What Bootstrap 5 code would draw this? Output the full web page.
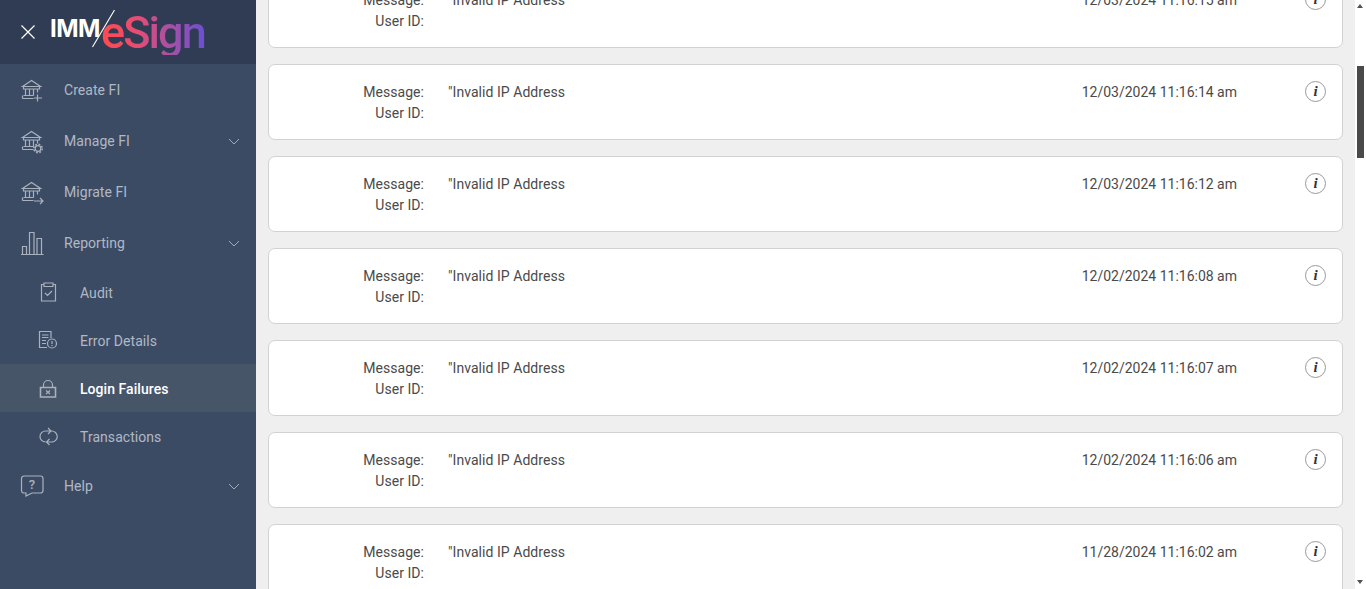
<!DOCTYPE html>
<html lang="en">
<head>
    <meta charset="UTF-8">
    <meta name="viewport" content="width=device-width, initial-scale=1.0">
    <title>Login Failures</title>
    <link href="https://cdn.jsdelivr.net/npm/bootstrap@5.3.0/dist/css/bootstrap.min.css" rel="stylesheet">
    <style>
        body {
            font-family: Roboto, "Liberation Sans", sans-serif;
            font-size: 14px;
            line-height: 21px;
            letter-spacing: .05px;
            color: #4a4a4a;
            height: 100vh;
            overflow: hidden;
        }
        .side-panel { width: 256px; background: #3c4b64; }
        .brand-bar { height: 64px; background: #303c54; padding-left: 20px; }
        .brand-close { width: 16px; height: 16px; margin-right: 14px; }
        .brand-imm { font-family: Inter, sans-serif; font-weight: 700; font-size: 24px; line-height: 24px; color: #fff; letter-spacing: -.5px; margin-top: -7px; }
        .brand-slash { width: 24px; height: 40px; margin: -4px -15px 0 -8px; }
        .brand-esign {
            font-size: 45px; line-height: 45px; font-weight: 500; letter-spacing: -1.9px; margin-top: 0;
            background: linear-gradient(90deg, #ff4a4f 0%, #e64d74 35%, #a450a8 68%, #6a50d2 100%);
            -webkit-background-clip: text; background-clip: text; color: transparent;
        }
        .side-link { color: #b1b8c4; height: 51px; padding: 2px 16px 0 20px; }
        .side-link:hover { color: #fff; }
        .side-link svg.side-icon { width: 24px; height: 24px; margin-right: 20px; flex: none; }
        .side-link.side-sub { height: 48px; padding-left: 36px; }
        .side-link.active { color: #fff; background: #475569; font-weight: 500; }
        .side-icon { fill: none; stroke: #a9b1bd; stroke-width: 1.2; }
        .side-chevron { fill: none; stroke: #a3abb8; stroke-width: 1; width: 12px; height: 7px; margin-left: auto; }
        .content-area { background: #efefef; padding: 0 12px; min-width: 0; }
        .log-list { margin-top: -28px; }
        .log-card { height: 76px; border-color: #d2d2d2; border-radius: 7px; padding: 17px 16px 16px 0; flex: none; }
        .log-label { width: 155px; }
        .log-value { margin-left: 24px; }
        .log-date { margin-right: 68px; letter-spacing: 0; }
        .info-mark {
            width: 21px; height: 21px; border: 1px solid #999; margin-top: -1px;
            font: italic 700 15px/19px "Liberation Serif", serif; color: #333;
        }
        .fake-scroll { width: 11px; background: #fff; }
        .scroll-arrow { width: 0; height: 0; border-left: 3.5px solid transparent; border-right: 3.5px solid transparent; margin-left: 2px; }
        .scroll-arrow.up { border-bottom: 4px solid #505050; margin-top: 4px; }
        .scroll-arrow.down { border-top: 4px solid #505050; margin-bottom: 5px; }
        .scroll-thumb { width: 7px; height: 92px; margin: 58px 0 0 2px; background: #4a4a4a; }
    </style>
</head>
<body class="d-flex">

    <svg width="0" height="0" class="position-absolute">
        <symbol id="bank" viewBox="0 0 24 24">
            <path d="M2.500 7.500 11.500 1.500 20.500 7.500ZM3.500 7.500V10H19.500V7.500M5.500 10V16.500M9.500 10V16.500M13.500 10V16.500M17.500 10V13.500M3.500 16.500H13.500M2.500 19.500V16.500M2.500 19.500H13.500" />
        </symbol>
    </svg>

    <aside class="side-panel flex-shrink-0">
        <div class="brand-bar d-flex align-items-center">
            <svg class="brand-close" viewBox="0 0 16 16" fill="none" stroke="#fff" stroke-width="1.2"><path d="M1.500 1.500 14.500 14.500M14.500 1.500 1.500 14.500"/></svg>
            <span class="brand-imm">IMM</span>
            <svg class="brand-slash" viewBox="0 0 24 40" fill="none" stroke="#fff" stroke-width="1.1"><path d="M22.500 0 .5 37"/></svg>
            <span class="brand-esign">eSign</span>
        </div>
        <nav class="nav flex-column">
            <a class="nav-link side-link d-flex align-items-center" href="#">
                <svg class="side-icon" viewBox="0 0 24 24"><use href="#bank"/><path d="M17.500 15.500V22.500M14 19H22"/></svg>Create FI
            </a>
            <a class="nav-link side-link d-flex align-items-center" href="#">
                <svg class="side-icon" viewBox="0 0 24 24"><use href="#bank"/><circle cx="18" cy="18.500" r="2.800"/><circle cx="18" cy="18.500" r="4.200" stroke-dasharray="1.800 1.500" stroke-width="1.500"/></svg>Manage FI
                <svg class="side-chevron" viewBox="0 0 12 7"><path d="M1 1 6 6 11 1"/></svg>
            </a>
            <a class="nav-link side-link d-flex align-items-center" href="#">
                <svg class="side-icon" viewBox="0 0 24 24"><use href="#bank"/><path d="M14 20H23M20 17 23 20 20 23"/></svg>Migrate FI
            </a>
            <a class="nav-link side-link d-flex align-items-center" href="#">
                <svg class="side-icon" viewBox="0 0 24 24"><path d="M1 22.500H23.500M2.500 22.500V14.500H6.500V22.500M9.500 22.500V.5H14V22.500M17 22.500V6.500H21.500V22.500"/></svg>Reporting
                <svg class="side-chevron" viewBox="0 0 12 7"><path d="M1 1 6 6 11 1"/></svg>
            </a>
            <a class="nav-link side-link side-sub d-flex align-items-center" href="#">
                <svg class="side-icon" viewBox="0 0 24 24"><path d="M8 3.500H5.500V20H19.500V3.500H17M8 2H17V5.500H8ZM9 12 11.500 14.500 16 10"/></svg>Audit
            </a>
            <a class="nav-link side-link side-sub d-flex align-items-center" href="#">
                <svg class="side-icon" viewBox="0 0 24 24"><path d="M11 18.500H3.500V2.500H15V9M6 6H12.500M6 8.500H12.500M6 11.500H10M6 14.500H10"/><circle cx="16" cy="14.500" r="4.500"/><path d="M16 12V15M16 16V17"/></svg>Error Details
            </a>
            <a class="nav-link side-link side-sub active d-flex align-items-center" href="#">
                <svg class="side-icon" viewBox="0 0 24 24"><path stroke-width="1.600" d="M4.500 10.500H19.500V20H4.500Z"/><path d="M7.500 10.500V8A4.500 4.500 0 0 1 16.500 8V10.500M10 13.500 14 17M14 13.500 10 17"/></svg>Login Failures
            </a>
            <a class="nav-link side-link side-sub d-flex align-items-center" href="#">
                <svg class="side-icon" viewBox="0 0 24 24"><path d="M9.500 17A5.500 5.500 0 0 1 9.500 6H14.500M12 3 15 6 12 9M15.500 6A5.500 5.500 0 0 1 16 17H10.500M13.500 14 10.500 17 13.500 20"/></svg>Transactions
            </a>
            <a class="nav-link side-link d-flex align-items-center" href="#">
                <svg class="side-icon" viewBox="0 0 24 24"><path d="M4 1H20.500A2.500 2.500 0 0 1 23 3.500V15.500A2.500 2.500 0 0 1 20.500 18H12L6 21V18H4A2.500 2.500 0 0 1 1.500 15.500V3.500A2.500 2.500 0 0 1 4 1Z"/><text x="12" y="14" text-anchor="middle" font-size="13" font-family="Roboto" font-weight="500" fill="#a9b1bd" stroke="none">?</text></svg>Help
                <svg class="side-chevron" viewBox="0 0 12 7"><path d="M1 1 6 6 11 1"/></svg>
            </a>
        </nav>
    </aside>

    <main class="content-area flex-grow-1 overflow-hidden">
        <div class="log-list d-flex flex-column gap-3" id="log-list"></div>
    </main>

    <div class="fake-scroll flex-shrink-0 d-flex flex-column">
        <div class="scroll-arrow up"></div>
        <div class="scroll-thumb"></div>
        <div class="scroll-arrow down mt-auto"></div>
    </div>

    <script src="https://cdn.jsdelivr.net/npm/bootstrap@5.3.0/dist/js/bootstrap.bundle.min.js"></script>
    <script>
        const dates = [
            '12/03/2024 11:16:15 am',
            '12/03/2024 11:16:14 am',
            '12/03/2024 11:16:12 am',
            '12/02/2024 11:16:08 am',
            '12/02/2024 11:16:07 am',
            '12/02/2024 11:16:06 am',
            '11/28/2024 11:16:02 am'
        ];
        const list = document.getElementById('log-list');
        dates.forEach(date => {
            const row = document.createElement('div');
            row.className = 'card log-card flex-row align-items-start';
            row.innerHTML = `
                <div class="log-label text-end">Message:<br>User ID:</div>
                <div class="log-value">"Invalid IP Address</div>
                <div class="log-date ms-auto">${date}</div>
                <span class="info-mark rounded-circle text-center flex-shrink-0">i</span>
            `;
            list.appendChild(row);
        });
    </script>
</body>
</html>
